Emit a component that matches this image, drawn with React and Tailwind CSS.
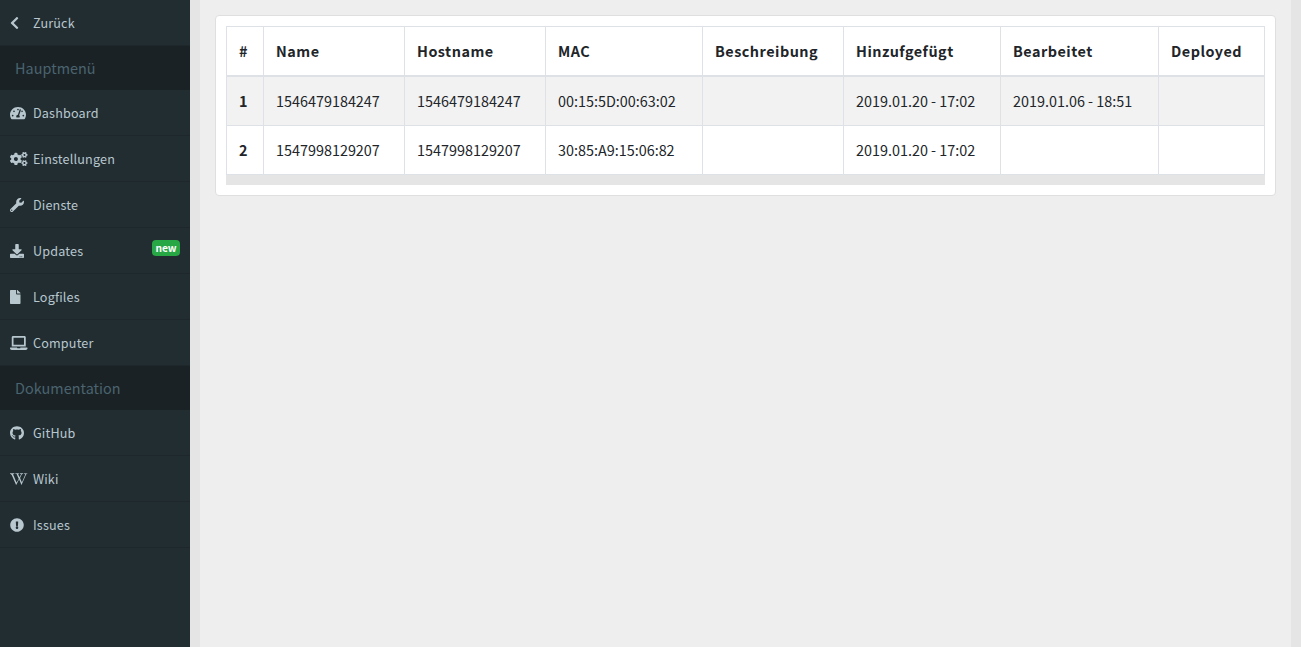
import React from "react";
import {
  FaChevronLeft,
  FaTachometerAlt,
  FaCogs,
  FaWrench,
  FaDownload,
  FaFile,
  FaLaptop,
  FaGithub,
  FaWikipediaW,
  FaExclamationCircle,
} from "react-icons/fa";

const mainItems = [
  { label: "Dashboard", icon: FaTachometerAlt, size: "w-4 h-3.5" },
  { label: "Einstellungen", icon: FaCogs, size: "w-[17.5px] h-3.5" },
  { label: "Dienste", icon: FaWrench, size: "w-3.5 h-3.5" },
  { label: "Updates", icon: FaDownload, size: "w-3.5 h-3.5", badge: "new" },
  { label: "Logfiles", icon: FaFile, size: "w-[10.5px] h-3.5" },
  { label: "Computer", icon: FaLaptop, size: "w-[17.5px] h-3.5" },
];

const docItems = [
  { label: "GitHub", icon: FaGithub, size: "w-3.5 h-3.5" },
  { label: "Wiki", icon: FaWikipediaW, size: "w-[17.5px] h-3.5" },
  { label: "Issues", icon: FaExclamationCircle, size: "w-3.5 h-3.5" },
];

const columns = [
  { label: "#", width: "w-[37px]" },
  { label: "Name", width: "w-[141px]" },
  { label: "Hostname", width: "w-[141px]" },
  { label: "MAC", width: "w-[157px]" },
  { label: "Beschreibung", width: "w-[141px]" },
  { label: "Hinzufgefügt", width: "w-[157px]" },
  { label: "Bearbeitet", width: "w-[158px]" },
  { label: "Deployed", width: "w-[106px]" },
];

const rows = [
  ["1", "1546479184247", "1546479184247", "00:15:5D:00:63:02", "", "2019.01.20 - 17:02", "2019.01.06 - 18:51", ""],
  ["2", "1547998129207", "1547998129207", "30:85:A9:15:06:82", "", "2019.01.20 - 17:02", "", ""],
];

function NavItem({ label, icon: Icon, size, badge }) {
  return (
    <a className="flex h-[46px] items-center border-b border-[#1e282c] pr-2.5 pl-2.5 text-[12.6px] tracking-[0.17px] text-[#b8c7ce]">
      <span className="flex h-[13px] w-[23px] shrink-0 items-start">
        <Icon className={size} preserveAspectRatio="none" />
      </span>
      <span className="flex-1 pt-0.5">{label}</span>
      {badge && (
        <span className="mb-1.5 flex h-4 w-7 items-center justify-center rounded bg-[#28a745] pt-px text-[10.2px] font-bold tracking-[-0.1px] text-white">
          {badge}
        </span>
      )}
    </a>
  );
}

function NavHeader({ children }) {
  return (
    <div className="flex h-11 items-center bg-[#1a2226] pl-[15px] text-[14.4px] tracking-[0.05px] text-[#4b646f]">
      {children}
    </div>
  );
}

export default function App() {
  return (
    <div className="flex h-[647px] w-full overflow-hidden bg-[#e5e5e5] font-['Noto_Sans_CJK_SC',sans-serif] text-[#212529]">
      <nav className="w-[190px] shrink-0 bg-[#222d32]">
        <NavItem label="Zurück" icon={FaChevronLeft} size="w-[9px] h-3.5" />
        <NavHeader>Hauptmenü</NavHeader>
        {mainItems.map((item) => (
          <NavItem key={item.label} {...item} />
        ))}
        <NavHeader>Dokumentation</NavHeader>
        {docItems.map((item) => (
          <NavItem key={item.label} {...item} />
        ))}
      </nav>
      <main className="mx-2.5 min-w-0 flex-1 bg-[#eeeeee] p-[15px]">
        <div className="rounded border border-[#dfdfdf] bg-white p-2.5">
          <div className="bg-[#e5e5e5] pb-2.5">
            <table className="w-full table-fixed border-separate border-spacing-0 border-r border-[#dee2e6] bg-white text-left text-[14.4px] leading-6">
              <thead>
                <tr>
                  {columns.map((c) => (
                    <th
                      key={c.label}
                      className={`${c.width} h-[51px] border-t border-b-2 border-l border-[#dee2e6] p-0 pl-3 font-bold tracking-[0.5px]`}
                    >
                      {c.label}
                    </th>
                  ))}
                </tr>
              </thead>
              <tbody>
                {rows.map((row) => (
                  <tr key={row[0]} className="odd:bg-[#f2f2f2]">
                    {row.map((cell, i) => (
                      <td
                        key={i}
                        className="h-[49px] border-b border-l border-[#dee2e6] p-0 pl-3 whitespace-nowrap first:font-bold"
                      >
                        {cell}
                      </td>
                    ))}
                  </tr>
                ))}
              </tbody>
            </table>
          </div>
        </div>
      </main>
    </div>
  );
}
